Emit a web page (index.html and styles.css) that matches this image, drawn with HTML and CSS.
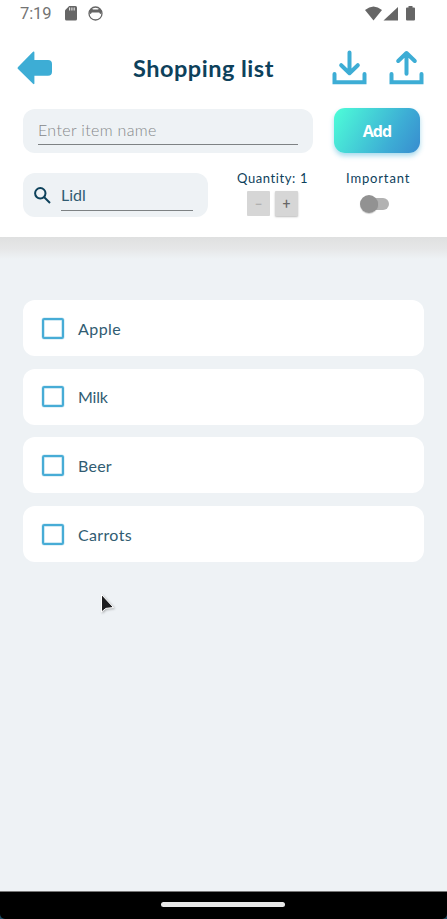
FILE: index.html
```html
<!DOCTYPE html>
<html lang="en">
<head>
<meta charset="utf-8">
<title>Shopping list</title>
<link rel="stylesheet" href="styles.css">
</head>
<body>
<div class="phone">
  <header class="header">
    <div class="status">
      <span class="clock">7:19</span>
      <svg class="sd" width="12" height="15" viewBox="0 0 12 15"><path fill="#666" d="M4.200 0H10.500Q12 0 12 1.500V13Q12 14.500 10.500 14.500H1.500Q0 14.500 0 13V4.200Z"/><path d="M4.600 1.500v3M6.900 1.500v3M9.200 1.500v3" stroke="#ddd" stroke-width="1.200"/></svg>
      <svg class="face" width="15" height="15" viewBox="0 0 15 15"><circle cx="7.500" cy="7.500" r="6.500" fill="none" stroke="#666" stroke-width="1.300"/><path fill="#666" d="M1.300 4.800 3.500 2.300 5 3.500h5l1.500-1.200 2.200 2.500-.5 3.200-1.200-.3-.8-1.200H3.800L3 7.700 1.800 8Z"/></svg>
      <svg class="signals" width="51" height="16" viewBox="0 0 51 16"><g fill="#666"><path d="M0 4Q8.500-3 17 4L8.500 14.500Z"/><path d="M18.500 14.500H33V1Z"/><path d="M43.500 0h4v1.500H49q1 0 1 1v11q0 1-1 1h-7q-1 0-1-1v-11q0-1 1-1h1.500Z"/></g></svg>
    </div>
    <div class="titlebar">
      <svg class="back" width="36" height="34" viewBox="0 0 36 34"><path fill="#3dadd5" d="M1.300 15.700 16 .8q1.400-1 1.400.8V9H31q4 0 4 4v7.700q0 4-4 4H17.400v7.500q0 1.700-1.400.6L1.300 18.300q-1.500-1.300 0-2.600Z"/></svg>
      <h1 class="title">Shopping list</h1>
      <svg class="download" width="36" height="36" viewBox="0 0 36 36"><g class="line"><path d="M17.500 2.500v20.500M9.200 15.200l8.300 8 8.300-8"/><path class="tray" d="M2.500 24v8.300h30V24"/></g></svg>
      <svg class="upload" width="36" height="36" viewBox="0 0 36 36"><g class="line"><path d="M17.500 23.800V3M9.200 11l8.300-8 8.300 8"/><path class="tray" d="M2.500 24v8.300h30V24"/></g></svg>
    </div>
    <div class="entry">
      <div class="box item-box"><div class="underlined placeholder"><span class="t-enter">Enter item name</span></div></div>
      <button class="add">Add</button>
    </div>
    <div class="options">
      <div class="box store-box">
        <svg width="17" height="17" viewBox="0 0 17 17"><g fill="none" stroke="#0d415b" stroke-width="2"><circle cx="6.300" cy="6.300" r="5.200"/><path d="m10 10 6 6"/></g></svg>
        <div class="underlined store"><span>Lidl</span></div>
      </div>
      <div class="quantity">
        <span class="label t-qty">Quantity: 1</span>
        <div class="steppers"><span class="step off">−</span><span class="step on">+</span></div>
      </div>
      <div class="important">
        <span class="label t-imp">Important</span>
        <div class="switch"><i class="knob"></i></div>
      </div>
    </div>
  </header>
  <main class="list">
    <div class="row"><i class="check"></i><span class="t-apple">Apple</span></div>
    <div class="row"><i class="check"></i><span class="t-milk">Milk</span></div>
    <div class="row"><i class="check"></i><span class="t-beer">Beer</span></div>
    <div class="row"><i class="check"></i><span class="t-carrots">Carrots</span></div>
  </main>
  <footer class="nav-wrap"><div class="nav"><i class="pill"></i></div></footer>
  <svg class="cursor" width="18" height="24" viewBox="0 0 18 24"><path d="M1.500 1.500v17.500l4.300-3.600 7.700-.9Z" fill="#1c1d1f" stroke="#fff" stroke-width="1"/></svg>
</div>
</body>
</html>
```

FILE: styles.css
```css
* { box-sizing: border-box; }
body { margin: 0; }
svg { display: block; flex: none; }
.phone {
  position: relative;
  width: 447px;
  height: 919px;
  display: flex;
  flex-direction: column;
  overflow: hidden;
  background: #eef2f5;
  color: #0d415b;
  font-family: "Lato", "Open Sans", sans-serif;
  font-variant-ligatures: none;
}
.header { height: 237px; flex: none; background: #fff; }
.status {
  display: flex;
  align-items: center;
  height: 28px;
  padding: 0 31px 0 20px;
  color: #737373;
}
.clock { width: 45px; font: 400 16.5px/28px Roboto, sans-serif; letter-spacing: -.1px; }
.sd, .face, .signals { margin-top: -1px; }
.face { margin-left: 11px; }
.signals { margin-left: auto; }
.titlebar { display: flex; align-items: flex-start; height: 81px; padding: 22px 22px 0 17px; }
.title {
  width: 142px;
  margin: 3px 0 0 80px;
  font-size: 23.5px;
  line-height: 30px;
  font-weight: 700;
  letter-spacing: .5px;
  white-space: nowrap;
}
.back { margin-top: 1px; }
.download { margin-left: 57px; }
.upload { margin-left: 21px; }
.line { fill: none; stroke: #3dadd5; stroke-width: 4; stroke-linecap: round; stroke-linejoin: round; }
.tray { stroke-linejoin: miter; }
.entry { display: flex; height: 63px; padding-left: 23px; gap: 21px; }
.box { height: 44px; border-radius: 12px; background: #eef2f5; }
.item-box { width: 290px; padding: 9px 15px; }
.underlined { height: 27px; border-bottom: 1px solid #7e8284; line-height: 24px; font-size: 16px; white-space: nowrap; }
.placeholder { color: #85888a; font-weight: 300; }
.t-enter { letter-spacing: .35px; }
.add {
  width: 86px;
  height: 45px;
  margin: -1px 0 0;
  padding: 1px 0 0;
  border: 0;
  border-radius: 11px;
  background: linear-gradient(120deg, #4cf8d8 5%, #3dadd5 68%, #388ccf);
  box-shadow: 0 3px 5px #3dadd570;
  color: #fff;
  font: 700 16px "Open Sans", sans-serif;
  letter-spacing: -.9px;
}
.options { display: flex; align-items: flex-start; padding-left: 23px; }
.store-box { display: flex; width: 185px; margin-top: 1px; padding: 10px 15px 0 11px; }
.store-box svg { margin-top: 4px; }
.store { width: 133px; height: 28px; margin-left: 10px; line-height: 23px; color: #315c72; }
.quantity { width: 72px; margin-left: 29px; }
.label { display: block; height: 19px; font-size: 13px; line-height: 12px; white-space: nowrap; }
.t-qty { letter-spacing: .6px; }
.t-imp { letter-spacing: .85px; }
.steppers { display: flex; gap: 5px; padding-left: 10px; }
.step { width: 23px; height: 25px; background: #d6d6d6; border-radius: 1px; text-align: center; font: 14px/26px Roboto, sans-serif; color: #666; }
.off { color: #aaa; }
.on { box-shadow: 0 1px 2px #0004; }
.important { width: 66px; margin-left: 37px; }
.switch { width: 25px; height: 12px; margin: 7px 0 0 18px; background: #b2b2b2; border-radius: 6px; }
.knob { display: block; width: 18px; height: 18px; margin-left: -4px; border-radius: 50%; background: #929292; transform: translateY(-3px); box-shadow: 0 1px 1px #0003; }
.list {
  flex: 1;
  display: flex;
  flex-direction: column;
  gap: 12.700px;
  padding: 63px 23px 0;
  background: linear-gradient(#dfe0e0, #e6e7e8 12px, #eef2f5 22px);
}
.row { display: flex; align-items: center; height: 56px; padding-left: 19px; gap: 14px; border-radius: 12px; background: #fff; font-size: 16px; color: #315c72; }
.t-apple { letter-spacing: .45px; }
.t-milk { letter-spacing: -.2px; }
.t-beer { letter-spacing: .25px; }
.t-carrots { letter-spacing: .35px; }
.check { width: 22px; height: 21px; border: 2px solid #47acd6; border-radius: 2px; box-shadow: inset 0 0 0 .5px #47acd680, 0 0 0 .5px #47acd650; }
.nav-wrap { height: 28px; background: #1f4d66; }
.nav { display: flex; justify-content: center; height: 28px; padding-top: 10px; border-top: 1px solid #777; background: #000; border-radius: 0 0 5px 5px; }
.pill { width: 124px; height: 5px; margin-right: 1px; border-radius: 3px; background: #e8e8e8; }
.cursor { position: absolute; left: 100px; top: 593px; filter: drop-shadow(1px 1px 1px #0004); }
```
